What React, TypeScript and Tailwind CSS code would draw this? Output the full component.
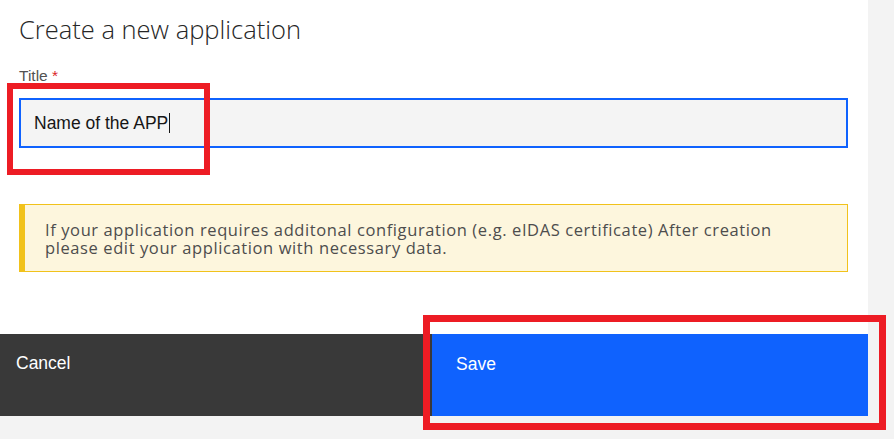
import React from "react";

export default function App() {
  return (
    <div className="relative w-[894px] h-[439px] bg-[#f3f3f3] overflow-hidden font-['Liberation_Sans',Arial,sans-serif]">
      <div className="w-[868px] h-[416px] bg-white flex flex-col">
        <h1 className="mt-[13px] ml-[19px] h-[32px] leading-[32px] text-[25.5px] font-light text-[#262626] font-['Open_Sans','Liberation_Sans',sans-serif]">
          Create a new application
        </h1>
        <label className="mt-[22px] ml-[19px] h-[18px] leading-[18px] text-[15.5px] text-[#525252]">
          Title <span className="text-[#da1e28]">*</span>
        </label>
        <div className="mt-[13px] ml-[19px] w-[829px] h-[50px] border-2 border-[#0f62fe] bg-[#f4f4f4] flex items-center pl-[13px]">
          <span className="text-[17.5px] leading-[20px] text-[#161616]">Name of the APP</span>
          <span className="ml-px w-px h-[20px] bg-[#161616]" />
        </div>
        <div className="mt-[56px] ml-[19px] w-[829px] h-[68px] border border-[#f1c21b] border-l-[6px] bg-[#fdf6dd] pl-[20px] pt-[16px] text-[16.5px] leading-[17.5px] tracking-[0.6px] text-[#4d4d4d] font-['Open_Sans','Liberation_Sans',sans-serif]">
          <p>If your application requires additonal configuration (e.g. eIDAS certificate) After creation</p>
          <p>please edit your application with necessary data.</p>
        </div>
        <div className="mt-auto h-[82px] flex">
          <button className="w-[432px] h-full bg-[#393939] text-white text-left pl-[16px] pt-[18px] text-[17.5px] leading-[22px] flex items-start">
            Cancel
          </button>
          <button className="flex-1 h-full bg-[#0f62fe] text-white text-left pl-[24px] pt-[19px] text-[17.5px] leading-[22px] flex items-start">
            Save
          </button>
        </div>
      </div>
      <div className="absolute left-[7px] top-[83px] w-[203px] h-[92px] border-[6px] border-[#ed1c24]" />
      <div className="absolute left-[423px] top-[315px] w-[463px] h-[115px] border-[7px] border-[#ed1c24]" />
    </div>
  );
}
